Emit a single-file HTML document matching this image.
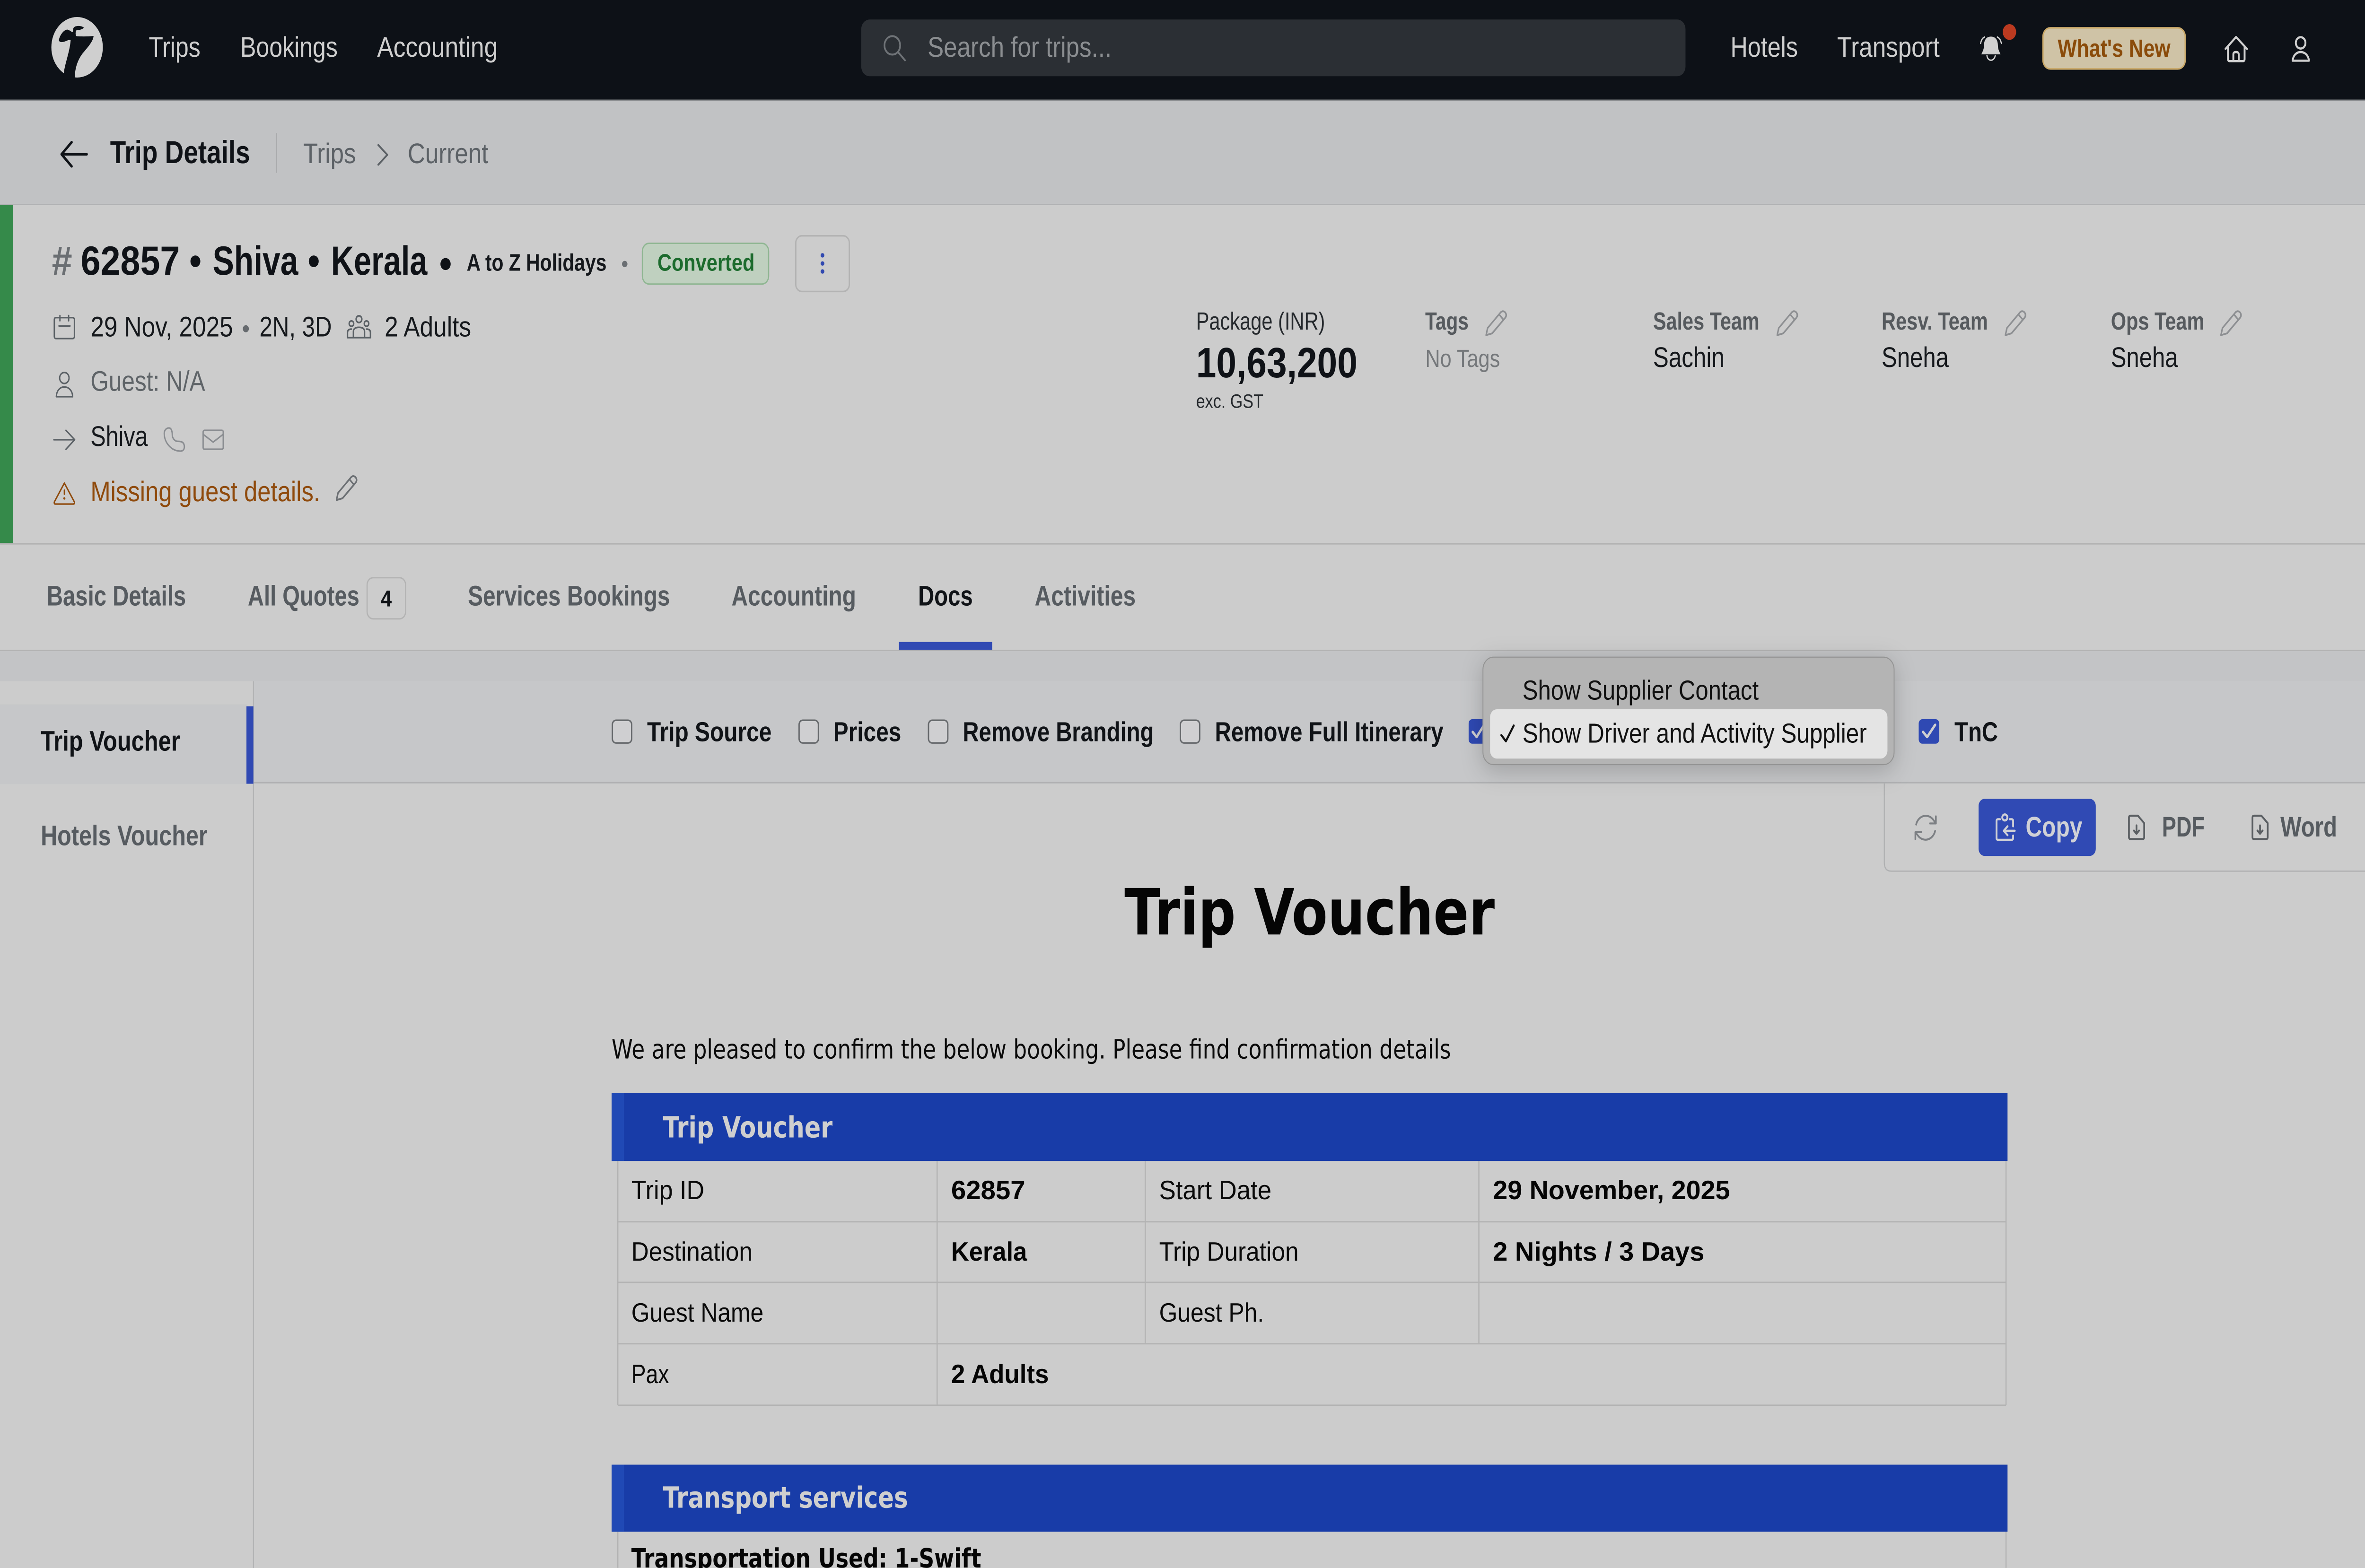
<!DOCTYPE html>
<html lang="en">
<head>
<meta charset="utf-8">
<title>Trip Details</title>
<style>
html,body{margin:0;padding:0;background:#ccc;width:100%;height:100%;overflow:hidden}
svg{display:block;position:fixed;left:0;top:0;width:100vw;height:100vh;overflow:hidden}
text{font-family:"Liberation Sans",Arial,sans-serif;text-rendering:geometricPrecision;white-space:pre}
.v{font-family:"DejaVu Sans","Liberation Sans",sans-serif}
.b{font-weight:700}
.i{fill:none;stroke-linecap:round;stroke-linejoin:round}
</style>
</head>
<body>
<svg viewBox="0 0 1568 884.267" preserveAspectRatio="none" xmlns="http://www.w3.org/2000/svg">
<defs>
<g id="pen" class="i"><path d="M.8 14 L1.8 10 L10.5 1.1 Q12 -.1 13.5 1.2 Q14.8 2.8 13.4 4.3 L4.8 13 Z M9.4 2.3 L12.3 5.3"/></g>
</defs>

<!-- page base -->
<rect width="1568" height="884.267" fill="#cccccc"/>

<!-- nav -->
<rect width="1568" height="56.2" fill="#0d1117"/>
<rect y="56.2" width="1568" height=".6" fill="#8b8d90"/>
<g transform="translate(29.33,5.33) scale(.08889)">
<circle cx="245" cy="240" r="192" fill="#cfcfcf"/>
<path fill="#0d1117" d="M110,190 C118,160 150,125 175,128 C190,132 205,145 212,142 C218,135 212,125 220,115 C235,100 280,103 295,115 C285,128 260,130 238,133 C232,145 232,165 242,170 C280,172 330,172 368,168 C365,195 345,220 300,265 C262,300 225,360 228,445 L140,445 L146,402 C155,340 190,270 197,195 C190,185 150,210 125,207 C112,205 108,198 110,190Z"/>
</g>
<g font-size="16" fill="#cfcfcf">
<text x="98.6" y="32" textLength="34.3" lengthAdjust="spacingAndGlyphs">Trips</text>
<text x="159.3" y="32" textLength="64.6" lengthAdjust="spacingAndGlyphs">Bookings</text>
<text x="250" y="32" textLength="80" lengthAdjust="spacingAndGlyphs">Accounting</text>
<text x="1147.3" y="32" textLength="44.7" lengthAdjust="spacingAndGlyphs">Hotels</text>
<text x="1218" y="32" textLength="68" lengthAdjust="spacingAndGlyphs">Transport</text>
</g>
<rect x="571" y="11" width="546.5" height="32" rx="5.5" fill="#2b2f34"/>
<g class="i" stroke="#6f7377" stroke-width="1.1"><circle cx="591.6" cy="25.6" r="5.2"/><path d="M595.5 29.5 L600 34"/></g>
<text x="615" y="32" font-size="16" fill="#8b8e91" textLength="122" lengthAdjust="spacingAndGlyphs">Search for trips...</text>

<g transform="translate(1304,10.667) scale(.08889)">
<path fill="#d0d0d0" d="M180,112 C215,112 232,135 232,170 C232,195 245,210 252,225 L108,225 C115,210 128,195 128,170 C128,135 145,112 180,112Z"/>
<path class="i" stroke="#d0d0d0" stroke-width="9" d="M150,232 C155,272 205,272 212,232 M103,155 C108,135 115,122 132,115 M258,155 C252,135 245,122 228,115"/>
<circle cx="318" cy="83" r="50" fill="#bb3a20"/>
</g>
<rect x="1354.5" y="15.7" width="94.3" height="23.2" rx="5" fill="#cfc3a6" stroke="#c9a868" stroke-width=".9"/>
<text class="b" x="1364.3" y="32" font-size="14" fill="#8a4b0a" textLength="74.7" lengthAdjust="spacingAndGlyphs">What's New</text>
<g transform="translate(1461.33,13.33) scale(.08889)" class="i" stroke="#d0d0d0" stroke-width="14">
<path d="M160,160 L238,85 L320,160 M178,150 V225 Q178,238 192,238 H288 Q302,238 302,225 V150 M218,238 V195 Q218,180 238,180 Q258,180 258,195 V238"/>
<circle cx="720" cy="122" r="36"/>
<path d="M660,235 C665,200 690,180 720,180 C750,180 778,200 782,235 Z"/>
</g>

<!-- subheader -->
<rect y="56.8" width="1568" height="58.2" fill="#c1c2c4"/>
<rect y="115" width="1568" height=".7" fill="#b0b1b3"/>
<path class="i" stroke="#0f1217" stroke-width="1.5" d="M57.5 87 H41 M47.5 80.2 L40.8 87 L47.5 93.8"/>
<text class="b" x="73" y="92" font-size="18" fill="#0f1217" textLength="92.8" lengthAdjust="spacingAndGlyphs">Trip Details</text>
<rect x="183" y="75" width=".6" height="22.5" fill="#a9aaac"/>
<text x="201" y="92" font-size="16" fill="#5c6166" textLength="35" lengthAdjust="spacingAndGlyphs">Trips</text>
<path class="i" stroke="#5c6166" stroke-width="1.1" d="M250.8 81.8 L256.8 87.3 L250.8 92.9"/>
<text x="270.3" y="92" font-size="16" fill="#5c6166" textLength="53.5" lengthAdjust="spacingAndGlyphs">Current</text>

<!-- trip card -->
<rect y="115.6" width="8.6" height="190.8" fill="#358a4a"/>
<rect y="306.2" width="1568" height=".9" fill="#b3b3b3"/>
<text class="b" x="34.4" y="155" font-size="23" fill="#6a6e72" textLength="13.5" lengthAdjust="spacingAndGlyphs">#</text>
<g class="b" font-size="23" fill="#0f1217">
<text x="53.5" y="155" textLength="65.8" lengthAdjust="spacingAndGlyphs">62857</text>
<text x="125.5" y="155">•</text>
<text x="141" y="155" textLength="56.7" lengthAdjust="spacingAndGlyphs">Shiva</text>
<text x="204" y="155">•</text>
<text x="219.5" y="155" textLength="63.8" lengthAdjust="spacingAndGlyphs">Kerala</text>
</g>
<circle cx="295.4" cy="148.9" r="3.4" fill="#0f1217"/>
<text class="b" x="309.4" y="152.7" font-size="13.5" fill="#15181c" textLength="92.8" lengthAdjust="spacingAndGlyphs">A to Z Holidays</text>
<circle cx="414.2" cy="148.9" r="1.8" fill="#6b6f73"/>
<rect x="425.9" y="137.2" width="83.7" height="23" rx="4.5" fill="#bfd0bf" stroke="#8fb692" stroke-width=".8"/>
<text class="b" x="435.9" y="152.7" font-size="13.5" fill="#1c6b2d" textLength="64.4" lengthAdjust="spacingAndGlyphs">Converted</text>
<rect x="527.6" y="133" width="35.5" height="31.4" rx="4" fill="none" stroke="#b3b3b3" stroke-width=".9"/>
<g fill="#3149b0"><circle cx="545.3" cy="144" r="1.25"/><circle cx="545.3" cy="148.6" r="1.25"/><circle cx="545.3" cy="153.1" r="1.25"/></g>

<g transform="translate(32,170.667) scale(.08889)" class="i">
<g stroke="#5b6166" stroke-width="10">
<rect x="45" y="95" width="150" height="133" rx="12"/>
<path d="M87 82 V115 M152 82 V115 M80 148 H162"/>
<circle cx="120" cy="478" r="35"/>
<path d="M60,597 C62,555 90,535 120,535 C150,535 180,555 182,597 Z"/>
<path d="M42,870 H195 M132,810 L197,870 L132,930"/>
</g>
<g stroke="#8a8d91" stroke-width="10">
<path d="M865,830 C865,810 880,795 900,795 C915,795 925,810 925,840 C925,860 945,880 965,880 C985,880 1015,880 1015,915 C1015,935 1000,942 985,942 C920,942 865,890 865,830Z"/>
<rect x="1155" y="810" width="150" height="120" rx="10"/>
<path d="M1155,835 L1230,885 L1305,835"/>
</g>
<g stroke="#8f4a0c" stroke-width="10">
<path d="M120,1145 L195,1265 Q198,1278 185,1278 H55 Q42,1278 45,1265 Z M120,1190 V1215"/>
<circle cx="120" cy="1242" r="3" fill="#8f4a0c"/>
</g>
</g>
<text x="60" y="189.8" font-size="16" fill="#15181c" textLength="94.5" lengthAdjust="spacingAndGlyphs">29 Nov, 2025</text>
<circle cx="163" cy="185.4" r="2" fill="#666a6e"/>
<text x="172" y="189.8" font-size="16" fill="#15181c" textLength="48" lengthAdjust="spacingAndGlyphs">2N, 3D</text>
<g class="i" stroke="#5b6166" stroke-width=".95">
<circle cx="238" cy="180" r="1.9"/><circle cx="233" cy="182.5" r="1.5"/><circle cx="243" cy="182.5" r="1.5"/>
<path d="M234.3 190.4 V187 Q234.3 184.6 238 184.6 Q241.7 184.6 241.7 187 V190.4 Z M234.3 190.4 H230.4 V187.6 Q230.4 185.6 233 185.6 M241.7 190.4 H245.6 V187.6 Q245.6 185.6 243 185.6"/>
</g>
<text x="255" y="189.8" font-size="16" fill="#15181c" textLength="57.4" lengthAdjust="spacingAndGlyphs">2 Adults</text>
<text x="60" y="220.4" font-size="16" fill="#5f6468" textLength="76" lengthAdjust="spacingAndGlyphs">Guest: N/A</text>
<text x="60" y="251.5" font-size="16" fill="#15181c" textLength="38" lengthAdjust="spacingAndGlyphs">Shiva</text>
<text x="60" y="282.7" font-size="16" fill="#8f4a0c" textLength="152.3" lengthAdjust="spacingAndGlyphs">Missing guest details.</text>
<use href="#pen" x="222.3" y="268" stroke="#6b6f73" stroke-width="1"/>

<!-- metrics -->
<text x="793" y="185.9" font-size="14" fill="#25292d" textLength="85.5" lengthAdjust="spacingAndGlyphs">Package (INR)</text>
<text class="b" x="793" y="212.8" font-size="24" fill="#0f1217" textLength="107" lengthAdjust="spacingAndGlyphs">10,63,200</text>
<text x="793" y="230" font-size="11" fill="#25292d" textLength="44.6" lengthAdjust="spacingAndGlyphs">exc. GST</text>
<g font-size="14" fill="#565a5e">
<text class="b" x="944.9" y="185.9" textLength="28.8" lengthAdjust="spacingAndGlyphs">Tags</text>
<text class="b" x="1096" y="185.9" textLength="70.5" lengthAdjust="spacingAndGlyphs">Sales Team</text>
<text class="b" x="1247.5" y="185.9" textLength="70.5" lengthAdjust="spacingAndGlyphs">Resv. Team</text>
<text class="b" x="1399.5" y="185.9" textLength="62" lengthAdjust="spacingAndGlyphs">Ops Team</text>
</g>
<text x="945" y="207" font-size="14" fill="#75787b" textLength="49.5" lengthAdjust="spacingAndGlyphs">No Tags</text>
<g font-size="16" fill="#15181c">
<text x="1096" y="206.9" textLength="47.3" lengthAdjust="spacingAndGlyphs">Sachin</text>
<text x="1247.5" y="206.9" textLength="44.5" lengthAdjust="spacingAndGlyphs">Sneha</text>
<text x="1399.5" y="206.9" textLength="44.5" lengthAdjust="spacingAndGlyphs">Sneha</text>
</g>
<g stroke="#8d8f92" stroke-width="1">
<use href="#pen" x="984.5" y="175"/><use href="#pen" x="1177.5" y="175"/><use href="#pen" x="1328.8" y="175"/><use href="#pen" x="1471.7" y="175"/>
</g>

<!-- tabs -->
<g class="b" font-size="16" fill="#565b60">
<text x="31" y="341.5" textLength="92.3" lengthAdjust="spacingAndGlyphs">Basic Details</text>
<text x="164.3" y="341.5" textLength="74" lengthAdjust="spacingAndGlyphs">All Quotes</text>
<text x="310.2" y="341.5" textLength="134" lengthAdjust="spacingAndGlyphs">Services Bookings</text>
<text x="485" y="341.5" textLength="82.6" lengthAdjust="spacingAndGlyphs">Accounting</text>
<text x="608.7" y="341.5" fill="#101317" textLength="36.3" lengthAdjust="spacingAndGlyphs">Docs</text>
<text x="686" y="341.5" textLength="67" lengthAdjust="spacingAndGlyphs">Activities</text>
</g>
<rect x="243.4" y="325.8" width="25.5" height="23.2" rx="4" fill="none" stroke="#b3b3b3" stroke-width=".8"/>
<text class="b" x="256.1" y="342" font-size="13" fill="#101317" text-anchor="middle">4</text>
<rect x="596" y="362" width="61.8" height="4.4" fill="#3049b3"/>
<rect y="366.4" width="1568" height=".8" fill="#b2b2b2"/>

<!-- strip & bars -->
<rect y="367.2" width="1568" height="17" fill="#c3c4c6"/>
<rect x="168" y="384.2" width="1400" height="57" fill="#c6c7c9"/>
<rect x="168" y="441" width="1400" height=".8" fill="#b0b1b3"/>
<rect x="0" y="384.2" width="168" height="500.067" fill="#cccccc"/>
<rect x="167.7" y="384.2" width=".6" height="500.067" fill="#afb0b1"/>
<rect x="0" y="397.2" width="164" height="45" fill="#c6c7c9"/>
<rect x="163.4" y="398.3" width="4.6" height="43.7" fill="#3049b3"/>
<text class="b" x="27" y="423.3" font-size="16" fill="#101317" textLength="92.4" lengthAdjust="spacingAndGlyphs">Trip Voucher</text>
<text class="b" x="27" y="476.7" font-size="16" fill="#565b60" textLength="110.6" lengthAdjust="spacingAndGlyphs">Hotels Voucher</text>

<!-- checkboxes -->
<g fill="#cfcfd1" stroke="#66696c" stroke-width=".9">
<rect x="406" y="406.2" width="12.8" height="12.8" rx="2.4"/>
<rect x="529.8" y="406.2" width="12.8" height="12.8" rx="2.4"/>
<rect x="615.6" y="406.2" width="12.8" height="12.8" rx="2.4"/>
<rect x="782.6" y="406.2" width="12.8" height="12.8" rx="2.4"/>
</g>
<g class="b" font-size="15.5" fill="#101317">
<text x="429" y="418" textLength="82.6" lengthAdjust="spacingAndGlyphs">Trip Source</text>
<text x="552.5" y="418" textLength="45" lengthAdjust="spacingAndGlyphs">Prices</text>
<text x="638.3" y="418" textLength="126.7" lengthAdjust="spacingAndGlyphs">Remove Branding</text>
<text x="805.5" y="418" textLength="151.5" lengthAdjust="spacingAndGlyphs">Remove Full Itinerary</text>
<text x="1295.8" y="418" textLength="28.9" lengthAdjust="spacingAndGlyphs">TnC</text>
</g>
<rect x="973.7" y="405.6" width="13.6" height="13.8" rx="2.4" fill="#2f49b3"/>
<path class="i" stroke="#cfcfd1" stroke-width="1.5" d="M976.4 412.8 L979 415.6 L984 408.8"/>
<rect x="1272.1" y="405.6" width="13.6" height="13.8" rx="2.4" fill="#2f49b3"/>
<path class="i" stroke="#cfcfd1" stroke-width="1.5" d="M1275 412.8 L1277.7 415.6 L1283 408.8"/>

<!-- toolbar -->
<path d="M1249.3 441.8 V486.5 Q1249.3 491.3 1254 491.3 H1568" fill="#cccccc" stroke="#afb0b1" stroke-width=".7"/>
<g class="i" stroke="#7c7f83" stroke-width="1.1">
<path d="M1270.4 465 A6.6 6.6 0 0 1 1282 462.6 L1283.5 464.3 M1283.5 460.4 V464.4 H1279.6 M1283 468.6 A6.6 6.6 0 0 1 1271.4 471 L1269.9 469.4 M1269.9 473.3 V469.3 H1273.8"/>
</g>
<rect x="1311.8" y="450.5" width="77.7" height="32.2" rx="4" fill="#304ab4"/>
<g class="i" stroke="#cfd0d6" stroke-width="1.2">
<path d="M1326 462 H1324.7 Q1323.7 462 1323.7 463 V472.6 Q1323.7 473.6 1324.7 473.6 H1333.7 Q1334.7 473.6 1334.7 472.6 V471.2 M1334.7 466 V463 Q1334.7 462 1333.7 462 H1332.4 M1335.8 468.5 H1328.5 M1331 466 L1328.5 468.5 L1331 471"/>
<circle cx="1329.2" cy="461" r="1.7"/>
</g>
<text class="b" x="1343" y="471.8" font-size="16" fill="#d0d1d6" textLength="37.6" lengthAdjust="spacingAndGlyphs">Copy</text>
<g class="i" stroke="#5a5e62" stroke-width="1.15">
<path d="M1412.6 460 H1417.4 L1421.6 464.2 V472.1 Q1421.6 473.2 1420.5 473.2 H1412.6 Q1411.5 473.2 1411.5 472.1 V461.1 Q1411.5 460 1412.6 460Z M1416.5 465.5 V470 M1414.8 468.4 L1416.5 470.2 L1418.2 468.4"/>
<path transform="translate(81.9,0)" d="M1412.6 460 H1417.4 L1421.6 464.2 V472.1 Q1421.6 473.2 1420.5 473.2 H1412.6 Q1411.5 473.2 1411.5 472.1 V461.1 Q1411.5 460 1412.6 460Z M1416.5 465.5 V470 M1414.8 468.4 L1416.5 470.2 L1418.2 468.4"/>
</g>
<text class="b" x="1433.4" y="471.8" font-size="16" fill="#565b60" textLength="28.3" lengthAdjust="spacingAndGlyphs">PDF</text>
<text class="b" x="1511.9" y="471.8" font-size="16" fill="#565b60" textLength="37.6" lengthAdjust="spacingAndGlyphs">Word</text>

<!-- voucher -->
<text class="v b" x="745.5" y="527" font-size="36" fill="#050505" textLength="245.5" lengthAdjust="spacingAndGlyphs">Trip Voucher</text>
<text class="v" x="405.5" y="597" font-size="15" fill="#0a0a0a" textLength="556.5" lengthAdjust="spacingAndGlyphs">We are pleased to confirm the below booking. Please find confirmation details</text>

<rect x="405.5" y="616.5" width="925.5" height="38.2" fill="#183ca8"/>
<rect x="405.5" y="616.5" width="8.2" height="38.2" fill="#2049b5"/>
<text class="v b" x="439.5" y="641.5" font-size="16.5" fill="#cfcfcf" textLength="112.5" lengthAdjust="spacingAndGlyphs">Trip Voucher</text>

<g stroke="#b3b3b3" stroke-width=".8" fill="none">
<path d="M409.6 654.7 V792.5 M621.3 654.7 V792.5 M759.3 654.7 V757.8 M980.5 654.7 V757.8 M1330 654.7 V792.5 M409.6 689 H1330 M409.6 723.2 H1330 M409.6 757.8 H1330 M409.6 792.5 H1330"/>
<path d="M409.6 863.8 V884.2 M1330 863.8 V884.2"/>
</g>
<g class="v" font-size="15" fill="#0a0a0a">
<text x="418.6" y="676.3" textLength="48.4" lengthAdjust="spacingAndGlyphs">Trip ID</text>
<text x="418.6" y="711" textLength="80.3" lengthAdjust="spacingAndGlyphs">Destination</text>
<text x="418.6" y="745.3" textLength="87.6" lengthAdjust="spacingAndGlyphs">Guest Name</text>
<text x="418.6" y="780" textLength="25" lengthAdjust="spacingAndGlyphs">Pax</text>
<text x="768.5" y="676.3" textLength="74.5" lengthAdjust="spacingAndGlyphs">Start Date</text>
<text x="768.5" y="711" textLength="92.5" lengthAdjust="spacingAndGlyphs">Trip Duration</text>
<text x="768.5" y="745.3" textLength="69.5" lengthAdjust="spacingAndGlyphs">Guest Ph.</text>
</g>
<g class="v b" font-size="15" fill="#050505">
<text x="630.6" y="676.3" textLength="49.2" lengthAdjust="spacingAndGlyphs">62857</text>
<text x="630.6" y="711" textLength="50.3" lengthAdjust="spacingAndGlyphs">Kerala</text>
<text x="630.6" y="780" textLength="64.8" lengthAdjust="spacingAndGlyphs">2 Adults</text>
<text x="989.8" y="676.3" textLength="157.2" lengthAdjust="spacingAndGlyphs">29 November, 2025</text>
<text x="989.8" y="711" textLength="140.2" lengthAdjust="spacingAndGlyphs">2 Nights / 3 Days</text>
</g>

<rect x="405.5" y="826" width="925.5" height="37.8" fill="#183ca8"/>
<rect x="405.5" y="826" width="8.2" height="37.8" fill="#2049b5"/>
<text class="v b" x="439.5" y="850.3" font-size="16.5" fill="#cfcfcf" textLength="162.5" lengthAdjust="spacingAndGlyphs">Transport services</text>
<text class="v b" x="418.6" y="884" font-size="15" fill="#050505" textLength="232" lengthAdjust="spacingAndGlyphs">Transportation Used: 1-Swift</text>

<!-- popup -->
<g style="filter:drop-shadow(0 3px 7px rgba(0,0,0,.2))">
<rect x="983.2" y="370.6" width="272.6" height="60.6" rx="7" fill="#b4b4b4" stroke="#949494" stroke-width=".6"/>
</g>
<rect x="987.9" y="400" width="263.5" height="27.8" rx="4.5" fill="#e4e4e4"/>
<text x="1009.4" y="394.5" font-size="15.5" fill="#111" textLength="156.6" lengthAdjust="spacingAndGlyphs">Show Supplier Contact</text>
<path class="i" stroke="#111" stroke-width="1.3" d="M995.4 414.6 L998.4 418 L1003.6 409.2"/>
<text x="1009.4" y="418.8" font-size="15.5" fill="#111" textLength="228.3" lengthAdjust="spacingAndGlyphs">Show Driver and Activity Supplier</text>
</svg>
</body>
</html>
